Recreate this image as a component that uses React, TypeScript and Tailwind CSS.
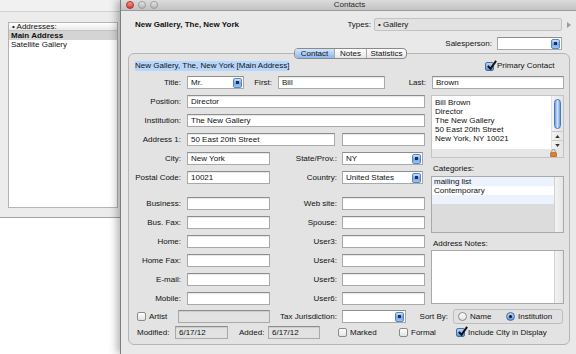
import { ReactNode } from 'react';

const field =
   'h-[13px] shrink-0 border border-[#a9a9a9] border-t-[#8d8d8d] px-[3px] leading-[11px] shadow-[inset_0_1px_1px_rgba(0,0,0,0.1)]';

function Field({ className = '', value = '', disabled = false }: { className?: string; value?: string; disabled?: boolean }) {
   return <div className={`${field} ${disabled ? 'bg-[#e2e2e2]' : 'bg-white'} ${className}`}>{value}</div>;
}

function Popup({ className = '', value = '' }: { className?: string; value?: string }) {
   return (
      <div className={`flex h-[13px] shrink-0 items-center border border-[#a9a9a9] border-t-[#8d8d8d] bg-white pr-px ${className}`}>
         <span className="flex-1 pl-[3px] leading-[11px]">{value}</span>
         <span className="flex h-[10px] w-[9px] items-center justify-center rounded-[2px] border border-[#5b86c0] bg-gradient-to-b from-[#cfe3fb] via-[#6fa6ea] to-[#9cc6f5]">
            <span className="h-[3px] w-[3px] bg-[#1d2f52]" />
         </span>
      </div>
   );
}

function Check({ checked = false }: { checked?: boolean }) {
   return (
      <span
         className={`relative inline-block h-[9px] w-[9px] shrink-0 rounded-[2px] border ${
            checked
               ? 'border-[#4a6fa3] bg-gradient-to-b from-[#bcd6f6] to-[#5b93dd]'
               : 'border-[#8b8b8b] bg-gradient-to-b from-white to-[#e2e2e2]'
         }`}
      >
         {checked && (
            <svg viewBox="0 0 12 12" className="absolute -top-[3px] left-0 h-[11px] w-[11px]">
               <path d="M2 6.5 L5 9.5 L11 1" fill="none" stroke="#111" strokeWidth="2.2" />
            </svg>
         )}
      </span>
   );
}

function Radio({ on = false }: { on?: boolean }) {
   return (
      <span
         className={`flex h-[9px] w-[9px] shrink-0 items-center justify-center rounded-full border ${
            on ? 'border-[#4a6fa3] bg-gradient-to-b from-[#bcd6f6] to-[#5b93dd]' : 'border-[#8b8b8b] bg-gradient-to-b from-white to-[#e2e2e2]'
         }`}
      >
         {on && <span className="h-[3px] w-[3px] rounded-full bg-[#111]" />}
      </span>
   );
}

function Row({ label, children }: { label: string; children: ReactNode }) {
   return (
      <div className="flex h-[13px] items-center">
         <span className="w-[46px] shrink-0 text-right">{label}</span>
         <div className="ml-[6px] flex items-center">{children}</div>
      </div>
   );
}

function PairRow({ label, label2 }: { label: string; label2: string }) {
   return (
      <div className="flex h-[13px] items-center">
         <span className="w-[46px] shrink-0 text-right">{label}</span>
         <Field className="ml-[6px] w-[83px]" />
         <span className="w-[67px] shrink-0 text-right">{label2}</span>
         <Field className="ml-[5px] w-[83px]" />
      </div>
   );
}

function Lights() {
   return (
      <div className="absolute left-[5px] top-px flex gap-[4px]">
         <span className="h-[8px] w-[8px] rounded-full border border-[#a5302b] bg-gradient-to-b from-[#f7958c] to-[#d9362e]" />
         <span className="h-[8px] w-[8px] rounded-full border border-[#9b9b9b] bg-gradient-to-b from-[#e8e8e8] to-[#b5b5b5]" />
         <span className="h-[8px] w-[8px] rounded-full border border-[#9b9b9b] bg-gradient-to-b from-[#e8e8e8] to-[#b5b5b5]" />
      </div>
   );
}

export default function App() {
   const addressLines = ['Bill Brown', 'Director', 'The New Gallery', '50 East 20th Street', 'New York, NY 10021'];
   const sidePairs = [
      ['Business:', 'Web site:'],
      ['Bus. Fax:', 'Spouse:'],
      ['Home:', 'User3:'],
      ['Home Fax:', 'User4:'],
      ['E-mail:', 'User5:'],
      ['Mobile:', 'User6:'],
   ];

   return (
      <div className="relative h-[354px] w-[576px] overflow-hidden bg-white font-['Liberation_Sans',Arial,sans-serif] text-[8px] leading-[10px] text-[#111]">
         {/* background window with address list */}
         <div className="absolute left-0 top-0 h-[218px] w-[121px] border-b border-[#a2a2a2] bg-[#ececec]">
            <div className="h-[12px] border-b border-[#d0d0d0] bg-[#f1f1f1]" />
            <div className="ml-[8px] mt-[10px] h-[186px] w-[110px] border border-[#b4b4b4] bg-white">
               <div className="flex h-[8px] items-center border-b border-[#c4c4c4] bg-gradient-to-b from-white to-[#e9e9e9] pl-[3px] leading-[8px]">
                  • Addresses:
               </div>
               <div className="h-[9px] bg-[#d4d4d4] pl-[2px] font-bold leading-[9px]">Main Address</div>
               <div className="h-[9px] pl-[2px] leading-[9px]">Satellite Gallery</div>
            </div>
         </div>

         {/* Contacts window */}
         <div className="absolute left-[120px] top-0 h-[354px] w-[456px] border-l border-[#7e7e7e] bg-[#e9e9e9] shadow-[-3px_0_8px_rgba(0,0,0,0.3)]">
            <div className="relative flex h-[11px] items-center justify-center border-b border-[#9c9c9c] bg-gradient-to-b from-[#dcdcdc] to-[#c2c2c2] text-[#2a2a2a]">
               <Lights />
               <span className="pl-[2px]">Contacts</span>
            </div>

            <div className="mt-[7px] flex h-[13px] items-center">
               <span className="flex-1 pl-[14px] font-bold">New Gallery, The, New York</span>
               <span>Types:</span>
               <div className="ml-[3px] h-[13px] w-[188px] rounded-[2px] border border-[#c2c2c2] bg-[#e2e2e2] pl-[3px] leading-[11px]">
                  • Gallery
               </div>
               <span className="flex w-[14px] justify-center">
                  <svg viewBox="0 0 4 6" className="h-[6px] w-[4px]">
                     <path d="M0 0 L4 3 L0 6 Z" fill="#9a9a9a" />
                  </svg>
               </span>
            </div>
            <div className="mt-[6px] flex h-[13px] items-center justify-end">
               <span>Salesperson:</span>
               <Popup className="ml-[5px] w-[65px]" />
               <span className="w-[14px]" />
            </div>

            {/* tab view */}
            <div className="relative ml-[7px] mt-[3px] w-[442px] rounded-[6px] border border-[#b5b5b5] bg-[#e3e3e3] pb-[5px] pl-[6px] pt-[7px]">
               <div className="absolute -top-[6px] left-[165px] flex h-[11px] overflow-hidden rounded-[4px] border border-[#8a8a8a] bg-gradient-to-b from-white to-[#e6e6e6] leading-[9px]">
                  <span className="w-[39px] bg-gradient-to-b from-[#d3e5fb] to-[#8db8ee] text-center">Contact</span>
                  <span className="w-[32px] border-l border-[#a9a9a9] text-center">Notes</span>
                  <span className="w-[40px] border-l border-[#a9a9a9] text-center">Statistics</span>
               </div>

               <div className="flex h-[10px] items-center">
                  <span className="bg-[#b7d6fd] leading-[10px]">New Gallery, The, New York [Main Address]</span>
                  <div className="ml-auto flex w-[134px] items-center pl-[50px]">
                     <Check checked />
                     <span className="ml-[3px]">Primary Contact</span>
                  </div>
               </div>

               <div className="mt-[5px] flex h-[13px] items-center">
                  <span className="w-[46px] shrink-0 text-right">Title:</span>
                  <Popup className="ml-[6px] w-[57px]" value="Mr." />
                  <span className="w-[28px] shrink-0 text-right">First:</span>
                  <Field className="ml-[6px] w-[107px]" value="Bill" />
                  <span className="w-[41px] shrink-0 text-right">Last:</span>
                  <Field className="ml-[6px] w-[132px]" value="Brown" />
               </div>

               <div className="mt-[6px] flex">
                  <div className="flex w-[290px] flex-col">
                     <div className="flex flex-col gap-[6px]">
                        <Row label="Position:">
                           <Field className="w-[238px]" value="Director" />
                        </Row>
                        <Row label="Institution:">
                           <Field className="w-[238px]" value="The New Gallery" />
                        </Row>
                        <Row label="Address 1:">
                           <Field className="w-[148px]" value="50 East 20th Street" />
                           <Field className="ml-[7px] w-[83px]" />
                        </Row>
                        <div className="flex h-[13px] items-center">
                           <span className="w-[46px] shrink-0 text-right">City:</span>
                           <Field className="ml-[6px] w-[83px]" value="New York" />
                           <span className="w-[67px] shrink-0 text-right">State/Prov.:</span>
                           <Popup className="ml-[5px] w-[81px]" value="NY" />
                        </div>
                        <div className="flex h-[13px] items-center">
                           <span className="w-[46px] shrink-0 whitespace-nowrap text-right">Postal Code:</span>
                           <Field className="ml-[6px] w-[83px]" value="10021" />
                           <span className="w-[67px] shrink-0 text-right">Country:</span>
                           <Popup className="ml-[5px] w-[81px]" value="United States" />
                        </div>
                     </div>
                     <div className="mt-[13px] flex flex-col gap-[6px]">
                        {sidePairs.map(([a, b]) => (
                           <PairRow key={a} label={a} label2={b} />
                        ))}
                     </div>
                  </div>

                  <div className="ml-[6px] flex w-[133px] flex-col">
                     <div className="flex h-[63px] flex-col border border-[#c4c4c4] bg-[#e6e6e6]">
                        <div className="flex h-[53px] bg-white">
                           <div className="flex-1 pl-[3px] pt-[2px] leading-[9px]">
                              {addressLines.map((l) => (
                                 <div key={l}>{l}</div>
                              ))}
                           </div>
                           <div className="flex w-[12px] flex-col items-center border-l border-[#e0e0e0] bg-gradient-to-r from-[#f4f4f4] to-[#e4e4e4]">
                              <span className="mt-[3px] h-[30px] w-[7px] rounded-full border border-[#4a79b8] bg-gradient-to-r from-[#6c9fe0] via-[#cfe2fa] to-[#6c9fe0]" />
                              <span className="mt-auto flex h-[9px] w-full items-center justify-center border-t border-[#c9c9c9]">
                                 <svg viewBox="0 0 6 4" className="h-[3px] w-[5px]">
                                    <path d="M0 4 L3 0 L6 4 Z" fill="#333" />
                                 </svg>
                              </span>
                              <span className="flex h-[9px] w-full items-center justify-center border-t border-[#c9c9c9]">
                                 <svg viewBox="0 0 6 4" className="h-[3px] w-[5px]">
                                    <path d="M0 0 L3 4 L6 0 Z" fill="#333" />
                                 </svg>
                              </span>
                           </div>
                        </div>
                        <div className="flex flex-1 items-center justify-end pr-[6px]">
                           <svg viewBox="0 0 8 9" className="h-[8px] w-[7px]">
                              <path d="M2 4 V2.5 a2 2 0 0 1 4 0 V4" fill="none" stroke="#8a8a8a" strokeWidth="1.1" />
                              <rect x="0.5" y="4" width="7" height="5" rx="0.8" fill="#d9822b" stroke="#9a5211" strokeWidth="0.6" />
                           </svg>
                        </div>
                     </div>

                     <div className="mt-[6px] pl-[2px]">Categories:</div>
                     <div className="mt-[2px] flex h-[57px] border border-[#a9a9a9]">
                        <div className="flex flex-1 flex-col bg-[#dcdcdc]">
                           <div className="h-[9px] bg-[#edf3fe] pl-[2px] leading-[9px]">mailing list</div>
                           <div className="h-[9px] bg-white pl-[2px] leading-[9px]">Contemporary</div>
                           <div className="h-[9px] bg-[#edf3fe]" />
                        </div>
                        <div className="w-[9px] border-l border-[#d0d0d0] bg-gradient-to-r from-[#f3f3f3] to-[#e6e6e6]" />
                     </div>

                     <div className="mt-[6px] pl-[2px]">Address Notes:</div>
                     <div className="mt-[1px] flex h-[54px] border border-[#a9a9a9] bg-white">
                        <div className="flex-1" />
                        <div className="w-[9px] border-l border-[#d0d0d0] bg-gradient-to-r from-[#f3f3f3] to-[#e6e6e6]" />
                     </div>
                  </div>
               </div>

               <div className="mt-[4px] flex h-[15px] items-center">
                  <div className="flex w-[43px] shrink-0 items-center pl-[2px]">
                     <Check />
                     <span className="ml-[3px]">Artist</span>
                  </div>
                  <Field className="w-[92px]" disabled />
                  <span className="w-[67px] shrink-0 whitespace-nowrap text-right">Tax Jurisdiction:</span>
                  <Popup className="ml-[5px] w-[64px]" />
                  <span className="w-[42px] shrink-0 text-right">Sort By:</span>
                  <div className="ml-[5px] flex h-[15px] w-[110px] items-center rounded-[3px] border border-[#bdbdbd] bg-[#e1e1e1] pl-[4px]">
                     <div className="flex w-[48px] items-center">
                        <Radio />
                        <span className="ml-[3px]">Name</span>
                     </div>
                     <Radio on />
                     <span className="ml-[3px]">Institution</span>
                  </div>
               </div>

               <div className="mt-[2px] flex h-[13px] items-center">
                  <span className="w-[40px] shrink-0 pl-[2px]">Modified:</span>
                  <Field className="w-[53px]" value="6/17/12" disabled />
                  <span className="w-[40px] shrink-0 pl-[11px]">Added:</span>
                  <Field className="w-[52px]" value="6/17/12" disabled />
                  <div className="ml-[18px] flex w-[61px] items-center">
                     <Check />
                     <span className="ml-[3px]">Marked</span>
                  </div>
                  <div className="flex w-[57px] items-center">
                     <Check />
                     <span className="ml-[3px]">Formal</span>
                  </div>
                  <Check checked />
                  <span className="ml-[3px]">Include City in Display</span>
               </div>
            </div>
         </div>
      </div>
   );
}
